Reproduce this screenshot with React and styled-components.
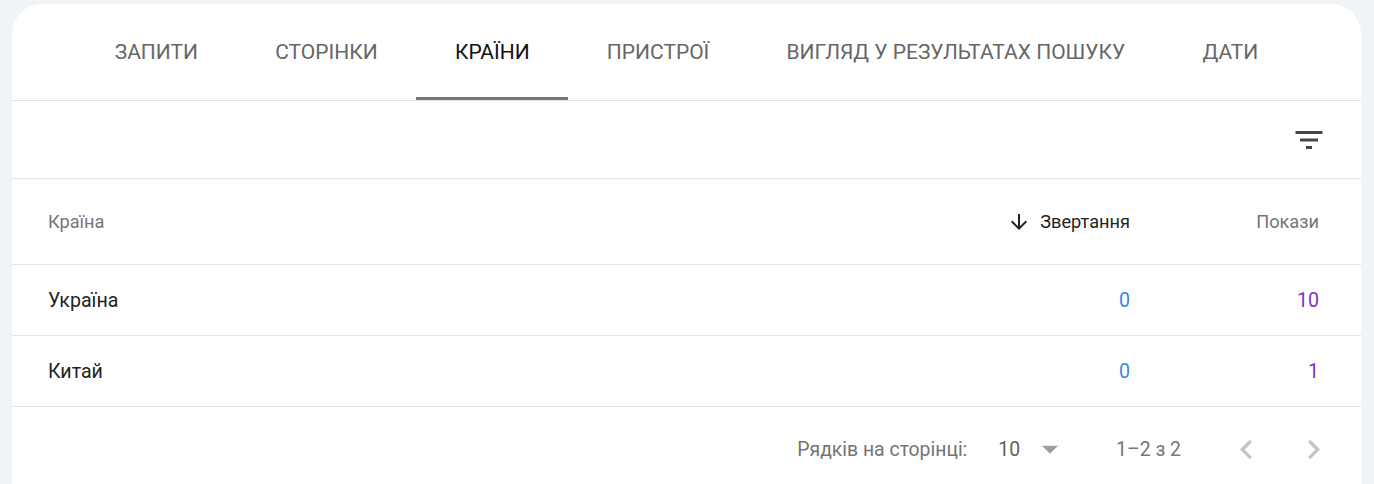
import React, { useState } from 'react';
import styled, { createGlobalStyle } from 'styled-components';

const TABS = ['Запити', 'Сторінки', 'Країни', 'Пристрої', 'Вигляд у результатах пошуку', 'Дати'];

const ROWS = [
	{ country: 'Україна', clicks: 0, impressions: 10 },
	{ country: 'Китай', clicks: 0, impressions: 1 },
];

const GlobalStyle = createGlobalStyle`
	body {
		margin: 0;
		background: #f0f4f9;
		font-family: Roboto, 'Noto Sans', Arial, sans-serif;
		overflow: hidden;
	}
`;

const FilterIcon = () => (
	<svg width="36" height="36" viewBox="0 0 24 24" fill="#444746">
		<path d="M10 18h4v-2h-4v2zM3 6v2h18V6H3zm3 7h12v-2H6v2z" />
	</svg>
);

const ArrowDown = () => (
	<svg width="24" height="24" viewBox="0 0 24 24" fill="#202124">
		<path d="M20 12l-1.41-1.41L13 16.17V4h-2v12.17l-5.58-5.59L4 12l8 8 8-8z" />
	</svg>
);

const DropTriangle = () => (
	<svg width="38" height="38" viewBox="0 0 24 24" fill="#9e9e9e">
		<path d="M7 10l5 5 5-5z" />
	</svg>
);

const Chevron = ({ flip }) => (
	<svg width="39" height="39" viewBox="0 0 24 24" fill="#c4c4c4" style={flip ? { transform: 'scaleX(-1)' } : undefined}>
		<path d="M15.41 7.41L14 6l-6 6 6 6 1.41-1.41L10.83 12z" />
	</svg>
);

const App = () => {
	const [activeTab, setActiveTab] = useState(2);
	return (
		<>
			<GlobalStyle />
			<Card>
				<TabBar>
					{TABS.map((tab, i) => (
						<Tab key={tab} isActive={i === activeTab} onClick={() => setActiveTab(i)}>
							{tab}
						</Tab>
					))}
				</TabBar>
				<Toolbar>
					<IconButton size={40}>
						<FilterIcon />
					</IconButton>
				</Toolbar>
				<Table>
					<HeaderRow>
						<Cell>Країна</Cell>
						<Cell align="right" isSorted>
							<ArrowDown />
							Звертання
						</Cell>
						<Cell align="right">Покази</Cell>
					</HeaderRow>
					{ROWS.map(row => (
						<BodyRow key={row.country}>
							<Cell>{row.country}</Cell>
							<Cell align="right" color="#3b86e5">{row.clicks}</Cell>
							<Cell align="right" color="#8330c9">{row.impressions}</Cell>
						</BodyRow>
					))}
				</Table>
				<Footer>
					<FooterLabel>Рядків на сторінці:</FooterLabel>
					<PageSize>
						10
						<DropTriangle />
					</PageSize>
					<Range>1–2 з 2</Range>
					<PageButtons>
						<IconButton size={39}>
							<Chevron />
						</IconButton>
						<IconButton size={39}>
							<Chevron flip />
						</IconButton>
					</PageButtons>
				</Footer>
			</Card>
		</>
	);
};

const Card = styled.div`
	margin: 4px 13px 0 12px;
	background: #fff;
	border-radius: 30px 30px 0 0;
	height: 520px;
	overflow: hidden;
`;

const TabBar = styled.div`
	display: flex;
	justify-content: center;
	height: 96px;
	border-bottom: 1px solid #e3e3e3;
`;

const Tab = styled.div`
	position: relative;
	display: flex;
	align-items: center;
	padding: 0 38.6px;
	font-size: 21px;
	font-weight: 400;
	text-transform: uppercase;
	color: ${props => (props.isActive ? '#111' : '#666')};
	cursor: pointer;
	&::after {
		content: '';
		position: absolute;
		left: 0;
		right: 0;
		bottom: 0;
		height: 3px;
		background: ${props => (props.isActive ? '#777' : 'transparent')};
	}
`;

const Toolbar = styled.div`
	display: flex;
	justify-content: flex-end;
	align-items: center;
	height: 77px;
	padding-right: 32px;
	border-bottom: 1px solid #e3e3e3;
`;

const IconButton = styled.button`
	display: flex;
	align-items: center;
	justify-content: center;
	padding: 0;
	border: none;
	background: none;
	cursor: pointer;
	width: ${props => props.size}px;
	height: ${props => props.size}px;
	&:focus {
		outline: none;
	}
`;

const Table = styled.div`
	display: flex;
	flex-direction: column;
`;

const Row = styled.div`
	display: grid;
	grid-template-columns: 1fr 260px 189px;
	align-items: center;
	padding: 0 42px 0 36px;
	border-bottom: 1px solid #e3e3e3;
`;

const HeaderRow = styled(Row)`
	height: 85px;
	font-size: 18.2px;
	color: #757575;
`;

const BodyRow = styled(Row)`
	height: 70px;
	font-size: 19.6px;
	color: #1f1f1f;
`;

const Cell = styled.div`
	display: flex;
	align-items: center;
	justify-content: ${props => (props.align === 'right' ? 'flex-end' : 'flex-start')};
	gap: 9px;
	color: ${props => props.color || (props.isSorted ? '#1f1f1f' : 'inherit')};
`;

const Footer = styled.div`
	display: flex;
	justify-content: flex-end;
	align-items: center;
	height: 84px;
	padding-right: 28px;
	font-size: 19.4px;
	color: #757575;
`;

const FooterLabel = styled.span`
	margin-right: 31px;
`;

const PageSize = styled.span`
	display: flex;
	align-items: center;
	gap: 11px;
	color: #5f5f5f;
	margin-right: 47px;
`;

const Range = styled.span`
	margin-right: 46px;
`;

const PageButtons = styled.div`
	display: flex;
	gap: 28px;
`;

export default App;
